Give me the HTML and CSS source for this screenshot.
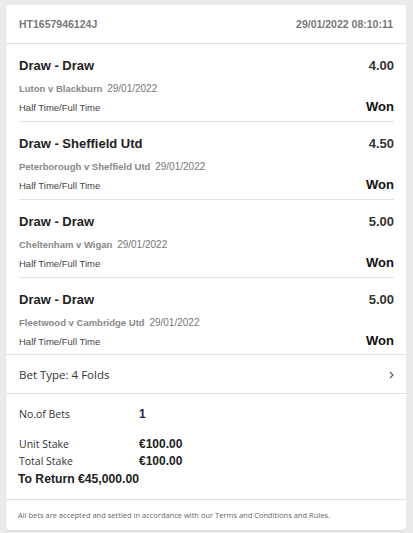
FILE: index.html
```html
<!DOCTYPE html>
<html lang="en">
<head>
  <meta charset="UTF-8">
  <title>Bet Receipt</title>
  <link rel="stylesheet" href="styles.css">
</head>
<body>

<div class="receipt">
  <div class="receipt-head">
    <span>HT1657946124J</span>
    <span>29/01/2022 08:10:11</span>
  </div>

  <div class="selections">
    <div class="selection">
      <div class="sel-row">
        <span class="sel-name">Draw - Draw</span>
        <span class="sel-odds">4.00</span>
      </div>
      <div class="sel-event"><b>Luton v Blackburn</b> 29/01/2022</div>
      <div class="sel-row">
        <span class="sel-market">Half Time/Full Time</span>
        <span class="sel-result">Won</span>
      </div>
    </div>
    <div class="selection">
      <div class="sel-row">
        <span class="sel-name">Draw - Sheffield Utd</span>
        <span class="sel-odds">4.50</span>
      </div>
      <div class="sel-event"><b>Peterborough v Sheffield Utd</b> 29/01/2022</div>
      <div class="sel-row">
        <span class="sel-market">Half Time/Full Time</span>
        <span class="sel-result">Won</span>
      </div>
    </div>
    <div class="selection">
      <div class="sel-row">
        <span class="sel-name">Draw - Draw</span>
        <span class="sel-odds">5.00</span>
      </div>
      <div class="sel-event"><b>Cheltenham v Wigan</b> 29/01/2022</div>
      <div class="sel-row">
        <span class="sel-market">Half Time/Full Time</span>
        <span class="sel-result">Won</span>
      </div>
    </div>
    <div class="selection">
      <div class="sel-row">
        <span class="sel-name">Draw - Draw</span>
        <span class="sel-odds">5.00</span>
      </div>
      <div class="sel-event"><b>Fleetwood v Cambridge Utd</b> 29/01/2022</div>
      <div class="sel-row">
        <span class="sel-market">Half Time/Full Time</span>
        <span class="sel-result">Won</span>
      </div>
    </div>
  </div>

  <div class="bet-type">
    <span>Bet Type: 4 Folds</span>
    <svg class="chevron" width="5" height="8" viewBox="0 0 5 8"><path d="M1 1l3 3-3 3" fill="none" stroke="#555" stroke-width="1.1"/></svg>
  </div>

  <div class="summary">
    <div class="sum-row bets">
      <span class="sum-label">No.of Bets</span>
      <span class="sum-value count">1</span>
    </div>
    <div class="sum-row">
      <span class="sum-label">Unit Stake</span>
      <span class="sum-value">€100.00</span>
    </div>
    <div class="sum-row">
      <span class="sum-label">Total Stake</span>
      <span class="sum-value">€100.00</span>
    </div>
    <div class="to-return">To Return €45,000.00</div>
  </div>

  <div class="terms">All bets are accepted and settled in accordance with our Terms and Conditions and Rules.</div>
</div>

</body>
</html>
```

FILE: styles.css
```css
body {
  margin: 0;
  padding: 5px 7px 6px 6px;
  background-color: #ebebeb;
  font-family: 'Liberation Sans', Arial, sans-serif;
  color: #222;
}
.receipt {
  background: #fff;
  border-radius: 3px;
  box-shadow: 0 1px 2px rgba(0, 0, 0, 0.08);
}
.receipt-head {
  display: flex;
  justify-content: space-between;
  align-items: center;
  height: 38px;
  padding: 0 13px;
  font-size: 10.5px;
  font-weight: bold;
  color: #777;
  border-bottom: 1px solid #e2e2e2;
}
.selections {
  padding: 0 12px 0 13px;
}
.selection {
  height: 65px;
  padding-top: 12px;
  border-bottom: 1px solid #e2e2e2;
}
.selection:last-child {
  height: 64px;
  border-bottom: none;
}
.sel-row {
  display: flex;
  justify-content: space-between;
  align-items: baseline;
}
.sel-name {
  font-size: 13px;
  font-weight: bold;
  color: #222;
  line-height: 20px;
}
.sel-odds {
  font-size: 13px;
  font-weight: bold;
  color: #333;
}
.sel-event {
  margin-top: 6px;
  font-size: 10px;
  color: #777;
  line-height: 14px;
}
.sel-event b {
  font-size: 9.5px;
  color: #888;
  margin-right: 2px;
}
.sel-market {
  font-size: 9.5px;
  color: #444;
  line-height: 24px;
}
.sel-result {
  font-size: 13px;
  font-weight: bold;
  color: #111;
}
.bet-type {
  display: flex;
  justify-content: space-between;
  align-items: center;
  height: 37px;
  padding: 1px 12px 0 13px;
  border-top: 1px solid #e2e2e2;
  border-bottom: 1px solid #e2e2e2;
  font-family: 'Open Sans', sans-serif;
  font-size: 11.5px;
  color: #333;
}
.summary {
  padding: 12px 13px 10px 12px;
}
.sum-row {
  display: flex;
  line-height: 17px;
}
.sum-row.bets {
  margin-bottom: 13px;
}
.sum-label {
  width: 120px;
  padding-left: 1px;
  font-family: 'Open Sans', sans-serif;
  font-size: 10.5px;
  color: #333;
}
.sum-value {
  font-size: 12px;
  font-weight: bold;
  color: #222;
}
.sum-value.count {
  color: #1f1f5c;
}
.to-return {
  font-size: 12.2px;
  font-weight: bold;
  color: #222;
  line-height: 19px;
}
.terms {
  border-top: 1px solid #e2e2e2;
  padding: 10px 13px 10px 12px;
  font-family: 'Open Sans', sans-serif;
  font-size: 7.5px;
  color: #666;
}
```
